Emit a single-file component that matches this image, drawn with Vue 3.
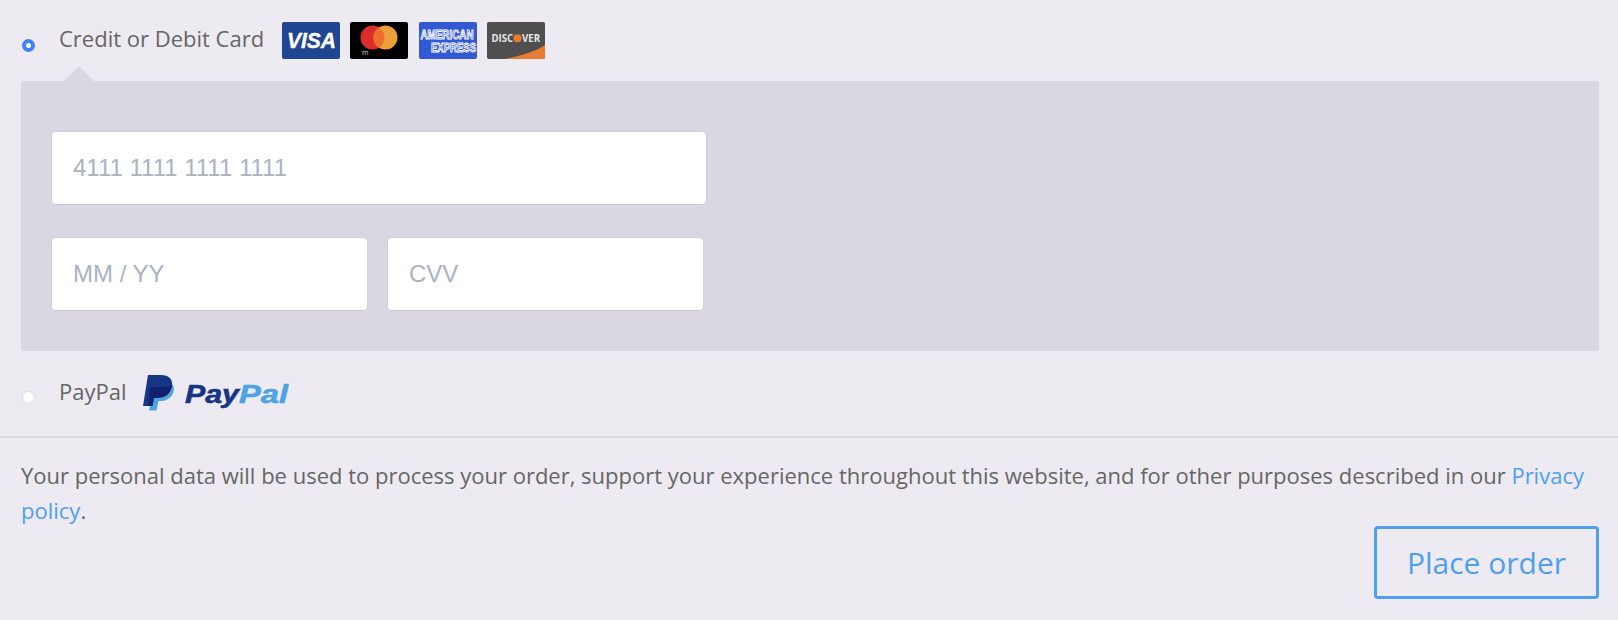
<script setup>
const cardNumber = '4111 1111 1111 1111'
</script>

<template>
  <div class="page">
    <section class="payment">
      <div class="method method-card">
        <span class="radio radio-on"></span>
        <span class="method-label">Credit or Debit Card</span>
        <div class="cards">
          <svg class="card" viewBox="0 0 58 37">
            <rect width="58" height="37" rx="2" fill="#1f4690" />
            <text x="5" y="26.300" class="visa" textLength="49" lengthAdjust="spacingAndGlyphs">VISA</text>
          </svg>
          <svg class="card" viewBox="0 0 58 37">
            <rect width="58" height="37" rx="2" fill="#000" />
            <circle cx="22.500" cy="15.500" r="12" fill="#dd2d2b" />
            <circle cx="35.500" cy="15.500" r="12" fill="#eda03a" />
            <path d="M29 5.400a12 12 0 0 1 0 20.200a12 12 0 0 1 0-20.200z" fill="#ee6f2d" />
            <text x="12" y="33" class="mc">m</text>
          </svg>
          <svg class="card" viewBox="0 0 58 37">
            <rect width="58" height="37" rx="2" fill="#3358d4" />
            <text transform="translate(1.500 17.300) scale(1 1.370)" class="amex" textLength="53" lengthAdjust="spacingAndGlyphs">AMERICAN</text>
            <text transform="translate(12 29.700) scale(1 1.370)" class="amex" textLength="45" lengthAdjust="spacingAndGlyphs">EXPRESS</text>
          </svg>
          <svg class="card" viewBox="0 0 58 37">
            <rect width="58" height="37" rx="2" fill="#4f4f4f" />
            <path d="M18 37C32 34 48 30 58 23V35a2 2 0 0 1-2 2z" fill="#e97c30" />
            <text x="4.500" y="19.800" class="disc" textLength="21.500" lengthAdjust="spacingAndGlyphs">DISC</text>
            <circle cx="30.500" cy="16.300" r="4" fill="#e97c30" />
            <text x="35" y="19.800" class="disc" textLength="18" lengthAdjust="spacingAndGlyphs">VER</text>
          </svg>
        </div>
      </div>

      <div class="panel">
        <div class="field field-wide">{{ cardNumber }}</div>
        <div class="row">
          <div class="field field-half">MM / YY</div>
          <div class="field field-half">CVV</div>
        </div>
      </div>

      <div class="method method-paypal">
        <span class="radio"></span>
        <span class="method-label">PayPal</span>
        <svg class="paypal" viewBox="0 0 146 36">
          <path d="M29 9C33 12 31 25 19 26H15.500L13.500 35.500H6L7 31H9.500L11 23H14C22 23 28 19 29 11z" fill="#4ca4e2" />
          <path d="M5 0H18C26 0 30 4 29 11C28 19 22 23 14 23H11L9.500 31H0z" fill="#173585" />
          <path d="M7 13L22 11.500C26 11 28 10.500 29 10C28 19 22 23 14 23H11L9.500 31H5z" fill="#10226d" />
          <text x="42" y="28" class="pp pp-dark" textLength="54" lengthAdjust="spacingAndGlyphs">Pay</text>
          <text x="96" y="28" class="pp pp-light" textLength="49" lengthAdjust="spacingAndGlyphs">Pal</text>
        </svg>
      </div>
    </section>

    <footer class="footer">
      <p class="notice">
        Your personal data will be used to process your order, support your experience throughout this website, and for other purposes described in our <a class="link">Privacy policy</a>.
      </p>
      <div class="actions">
        <button class="order" type="button">Place order</button>
      </div>
    </footer>
  </div>
</template>

<style scoped>
.page {
  width: 1618px;
  height: 620px;
  box-sizing: border-box;
  background: #edebf1;
  font-family: "Open Sans", "Noto Sans", sans-serif;
  color: #666;
  overflow: hidden;
}
.payment {
  padding: 0 19px 0 21px;
  height: 436px;
  box-sizing: border-box;
}
.method {
  display: flex;
  align-items: center;
}
.method-card {
  height: 81px;
  padding-bottom: 1px;
  box-sizing: border-box;
  position: relative;
}
.method-card::after {
  content: "";
  position: absolute;
  left: 43px;
  bottom: 0;
  width: 0;
  height: 0;
  border-left: 15px solid transparent;
  border-right: 15px solid transparent;
  border-bottom: 15px solid #dad7e2;
}
.radio {
  width: 13px;
  height: 13px;
  box-sizing: border-box;
  border-radius: 50%;
  background: #fff;
  border: 1px solid #dedce2;
  margin-left: 1px;
  margin-right: 24px;
  flex: none;
  margin-top: 10px;
}
.radio-on {
  border: 4px solid #3f82f7;
}
.method-label {
  font-size: 22px;
  line-height: 30px;
  color: #666;
}
.method-card .method-label {
  margin-top: -4px;
}
.cards {
  display: flex;
  gap: 10.500px;
  margin-left: 17.500px;
}
.card {
  width: 58px;
  height: 37px;
  display: block;
}
.visa {
  font: italic 700 22px "Liberation Sans", sans-serif;
  fill: #fff;
  stroke: #fff;
  stroke-width: 0.4px;
}
.mc {
  font: 400 7px "Open Sans", sans-serif;
  fill: #ddd;
}
.amex {
  font: 700 9.500px "Liberation Sans", sans-serif;
  fill: #3358d4;
  stroke: #fff;
  stroke-width: 0.7px;
}
.disc {
  font: 700 10.500px "Open Sans", sans-serif;
  fill: #e8e8e8;
}
.panel {
  background: #dad7e2;
  border-radius: 2px;
  height: 270px;
  box-sizing: border-box;
  padding: 50px 0 0 30px;
}
.field {
  box-sizing: border-box;
  height: 74px;
  background: #fff;
  border-radius: 5px;
  border: 1px solid #d3d1d9;
  border-bottom-color: #cbc9d1;
  padding: 0 21px;
  display: flex;
  align-items: center;
  font-family: "Liberation Sans", Arial, sans-serif;
  font-size: 24px;
  color: #a9b3c2;
}
.field-wide {
  width: 656px;
}
.row {
  display: flex;
  gap: 19px;
  margin-top: 32px;
}
.field-half {
  width: 317px;
}
.method-paypal {
  height: 85px;
}
.method-paypal .radio {
  margin-top: 8px;
}
.method-paypal .method-label {
  margin-top: -6px;
}
.paypal {
  width: 146px;
  height: 36px;
  margin-left: 16px;
  margin-top: -2px;
}
.pp {
  font: italic 700 26.500px "Liberation Sans", sans-serif;
  stroke-width: 0.6px;
}
.pp-dark { fill: #173585; stroke: #173585; }
.pp-light { fill: #4ca4e2; stroke: #4ca4e2; }
.footer {
  border-top: 2px solid #dad7e2;
  padding: 20px 19px 0 21px;
}
.notice {
  margin: 0;
  font-size: 22px;
  line-height: 34.500px;
  color: #666;
}
.link {
  color: #4f9fee;
}
.actions {
  display: flex;
  justify-content: flex-end;
  margin-top: -1px;
}
.order {
  width: 225px;
  height: 73px;
  box-sizing: border-box;
  border: 3px solid #4f9fee;
  border-radius: 4px;
  background: transparent;
  color: #4f9fee;
  font-family: "Open Sans", "Noto Sans", sans-serif;
  font-size: 30px;
  padding: 0;
}
</style>
